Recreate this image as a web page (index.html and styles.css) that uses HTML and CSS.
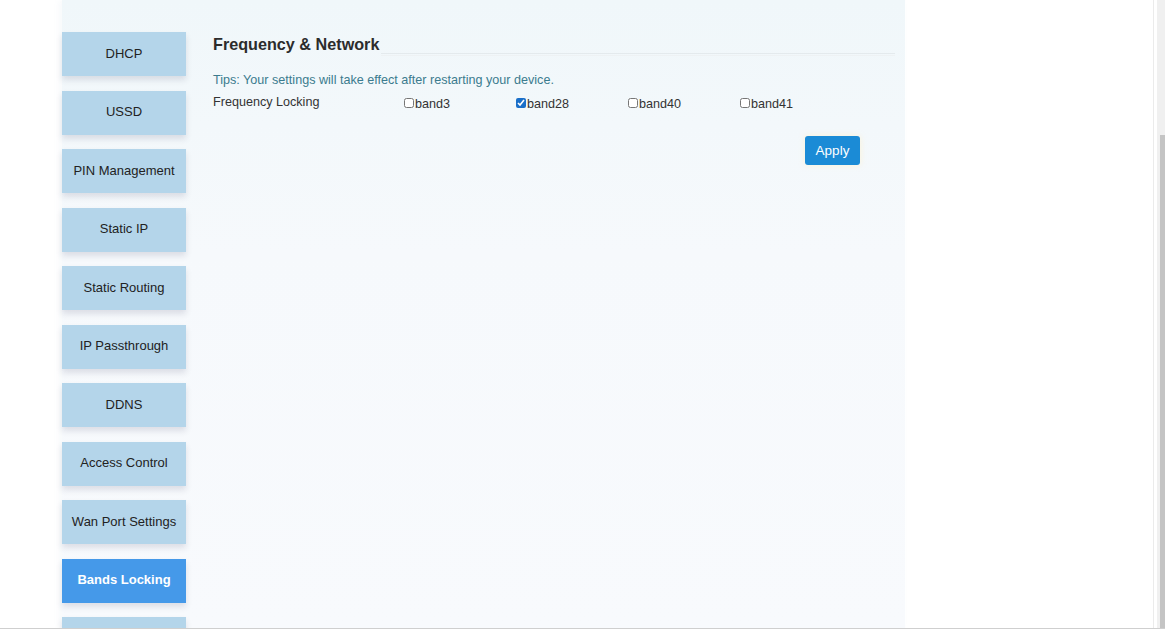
FILE: index.html
```html
<!DOCTYPE html>
<html>
<head>
  <meta charset="UTF-8">
  <title>Bands Locking</title>
  <link rel="stylesheet" href="styles.css">
</head>
<body>
  <div class="window">
    <div class="viewport">
      <div class="page">
        <div class="panel">
          <nav class="side-menu">
            <a href="#" class="menu-btn">DHCP</a>
            <a href="#" class="menu-btn">USSD</a>
            <a href="#" class="menu-btn">PIN Management</a>
            <a href="#" class="menu-btn">Static IP</a>
            <a href="#" class="menu-btn">Static Routing</a>
            <a href="#" class="menu-btn">IP Passthrough</a>
            <a href="#" class="menu-btn">DDNS</a>
            <a href="#" class="menu-btn">Access Control</a>
            <a href="#" class="menu-btn">Wan Port Settings</a>
            <a href="#" class="menu-btn active">Bands Locking</a>
            <a href="#" class="menu-btn"></a>
          </nav>

          <div class="content">
            <div class="section-title">
              <h3>Frequency &amp; Network</h3>
              <div class="rule"></div>
            </div>

            <p class="tips">Tips: Your settings will take effect after restarting your device.</p>

            <div class="form-row">
              <span class="row-label">Frequency Locking</span>
              <label class="band"><input type="checkbox">band3</label>
              <label class="band"><input type="checkbox" checked>band28</label>
              <label class="band"><input type="checkbox">band40</label>
              <label class="band"><input type="checkbox">band41</label>
            </div>

            <div class="actions">
              <button class="btn-apply">Apply</button>
            </div>
          </div>
        </div>
      </div>
      <div class="scrollbar">
        <div class="thumb"></div>
      </div>
    </div>
    <div class="statusbar"></div>
  </div>
</body>
</html>
```

FILE: styles.css
```css
html, body {
  margin: 0;
  padding: 0;
  background: #fff;
  font-family: "Liberation Sans", Arial, sans-serif;
  color: #333;
}

.window {
  display: flex;
  flex-direction: column;
  width: 1165px;
  height: 641px;
  overflow: hidden;
}

.viewport {
  display: flex;
  height: 628px;
  overflow: hidden;
}

.page {
  flex: 1;
  padding-left: 62px;
  border-right: 1px solid #ebebeb;
}

/* main light panel */
.panel {
  display: flex;
  width: 843px;
  height: 100%;
  background: linear-gradient(to bottom, #f0f7fa 0%, #f6f9fc 40%, #f8fafd 100%);
  box-shadow: -3px 0 6px rgba(120, 160, 180, 0.06);
}

.side-menu {
  display: flex;
  flex-direction: column;
  gap: 14.5px;
  width: 124px;
  padding-top: 32px;
  flex-shrink: 0;
}

.menu-btn {
  display: flex;
  align-items: center;
  justify-content: center;
  height: 44px;
  padding-bottom: 2px;
  box-sizing: border-box;
  flex-shrink: 0;
  background: #b4d5ea;
  color: #222;
  font-size: 13px;
  text-decoration: none;
  box-shadow: 0 4px 6px rgba(60, 60, 90, 0.14);
}

.menu-btn.active {
  background: #4599e9;
  color: #fff;
  font-weight: bold;
}

.content {
  flex: 1;
  padding: 34px 10px 0 27px;
}

.section-title {
  display: flex;
  align-items: flex-end;
  gap: 2px;
}

.section-title h3 {
  margin: 0;
  font-size: 16.2px;
  font-weight: bold;
  color: #2c2c2c;
  line-height: 20px;
}

.rule {
  flex: 1;
  height: 1px;
  margin-bottom: -2px;
  border-top: 1px solid #e4eaed;
  border-bottom: 1px solid #eef2f4;
}

.tips {
  margin: 17px 0 0;
  font-size: 12.6px;
  line-height: 18px;
  color: #3b7b8e;
}

.form-row {
  display: flex;
  align-items: flex-start;
  margin-top: 4px;
  font-size: 12.6px;
  line-height: 18px;
  color: #333;
}

.row-label {
  width: 191px;
}

.band {
  display: flex;
  align-items: center;
  width: 112px;
  padding-top: 2px;
}

.band input {
  width: 10px;
  height: 10px;
  margin: 0 1px 0 0;
  position: relative;
  top: -1px;
  accent-color: #1a6fc9;
}

.actions {
  display: flex;
  justify-content: flex-end;
  padding-right: 35px;
  margin-top: 23px;
}

.btn-apply {
  width: 55px;
  height: 29px;
  border: none;
  border-radius: 3px;
  background: #1b8bd6;
  color: #fff;
  font-family: "Liberation Sans", Arial, sans-serif;
  font-size: 13.5px;
  box-shadow: 0 0 6px rgba(255, 240, 200, 0.7);
}

.scrollbar {
  display: flex;
  flex-direction: column;
  width: 11px;
  background: linear-gradient(to right, #fff 3px, #f0f0f0 3px);
}

.thumb {
  flex: 1;
  margin: 135px 0 0 6px;
  background: #c4c4c4;
}

.statusbar {
  height: 12px;
  border-top: 1px solid #cfcfcf;
  background: #fff;
}
```
